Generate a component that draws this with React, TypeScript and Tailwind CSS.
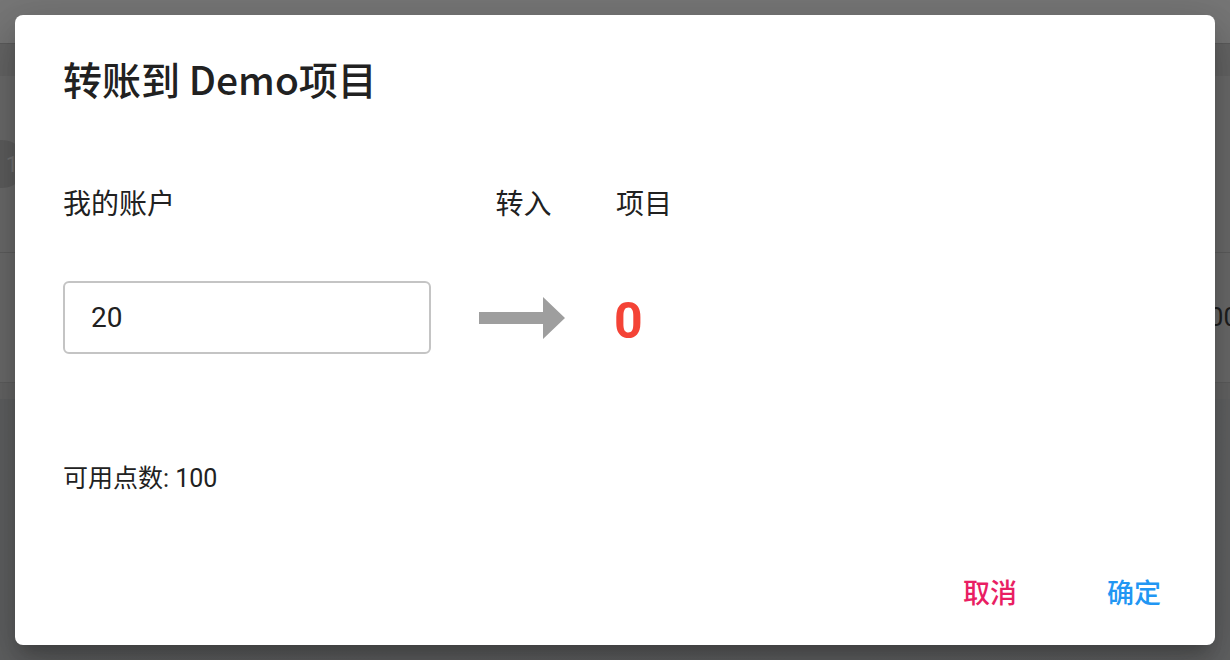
import React from "react";

function ArrowIcon() {
  return (
    <svg width="86" height="42" viewBox="0 0 86 42" aria-hidden="true">
      <polygon points="0,15 64,15 64,0 86,21 64,42 64,27 0,27" fill="#9e9e9e" />
    </svg>
  );
}

export default function App() {
  return (
    <div className="relative w-[1230px] h-[660px] overflow-hidden font-['Roboto','Noto_Sans_CJK_SC',sans-serif]">
      {/* dimmed page behind */}
      <div className="flex flex-col w-full h-full bg-[#5f6061]">
        <div className="h-[44px] bg-[#767676] border-b border-[#5c5c5c]" />
        <div className="h-[32px] bg-[#656565]" />
        <div className="h-[177px] bg-[#6b6b6b] border-b border-[#5e5e5e] flex items-center">
          <div className="ml-[-22px] w-[48px] h-[48px] rounded-full bg-[#5e5e5e] flex items-center justify-end pr-[8px] text-[22px] text-[#747474]">
            1
          </div>
        </div>
        <div className="h-[130px] bg-[#6b6b6b] border-b border-[#5e5e5e] flex items-center justify-end">
          <span className="mr-[-8px] text-[26px] text-[#1e1e1e]">100</span>
        </div>
        <div className="h-[16px] bg-[#656565]" />
        <div className="flex-1 bg-gradient-to-r from-[#5f6061] to-[#626364]" />
      </div>

      {/* dialog */}
      <div className="absolute inset-0 flex items-center justify-center">
        <div className="w-[1200px] h-[630px] bg-white rounded-[8px] shadow-[0_11px_15px_-7px_rgba(0,0,0,0.2),0_24px_38px_3px_rgba(0,0,0,0.14),0_9px_46px_8px_rgba(0,0,0,0.12)] flex flex-col pl-[48px]">
          <h2 className="mt-[39px] h-[48px] leading-[48px] text-[39px] font-medium text-[#212121] font-['Noto_Sans_CJK_SC',sans-serif]">
            转账到 Demo项目
          </h2>

          <div className="mt-[83px] grid grid-cols-[368px_185px_1fr] text-[28px] text-[#212121]">
            <div className="h-[40px] leading-[40px]">我的账户</div>
            <div className="h-[40px] leading-[40px] text-center">转入</div>
            <div className="h-[40px] leading-[40px]">项目</div>

            <div className="mt-[56px] h-[73px] border-2 border-[#c4c4c4] rounded-[6px] pl-[26px] flex items-center text-[28px] text-[#212121]">
              20
            </div>
            <div className="mt-[56px] flex items-center justify-center pr-[3px]">
              <ArrowIcon />
            </div>
            <div className="mt-[56px] ml-[-2px] flex items-center pt-[6px] text-[50px] font-bold text-[#f44336] leading-none">
              0
            </div>
          </div>

          <div className="mt-[109px] h-[32px] leading-[32px] text-[25px] text-[#212121]">
            可用点数: 100
          </div>

          <div className="mt-auto mb-[31px] flex justify-end gap-[90px] pr-[54px] text-[27px] font-medium">
            <button className="h-[40px] leading-[40px] text-[#e91e63]">取消</button>
            <button className="h-[40px] leading-[40px] text-[#2196f3]">确定</button>
          </div>
        </div>
      </div>
    </div>
  );
}
